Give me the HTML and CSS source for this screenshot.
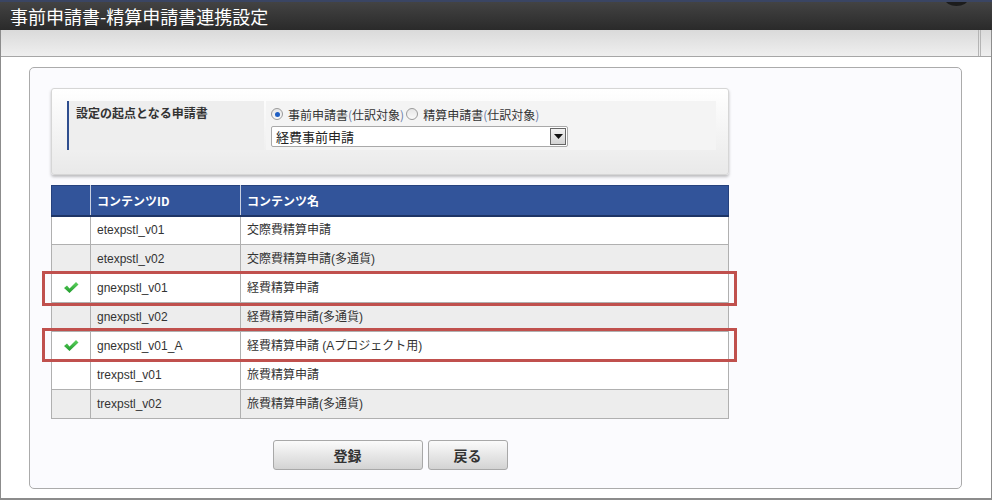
FILE: index.html
```html
<!DOCTYPE html>
<html lang="ja">
<head>
    <meta charset="UTF-8">
    <title>事前申請書-精算申請書連携設定</title>
    <link rel="stylesheet" href="styles.css">
</head>
<body>
<div class="window">
    <div class="titlebar">
        事前申請書-精算申請書連携設定
        <span class="title-knob"></span>
    </div>
    <div class="toolbar">
        <span class="toolbar-split"></span>
    </div>

    <div class="content">
        <div class="panel">
            <div class="search-box">
                <div class="search-row">
                    <div class="search-label">設定の起点となる申請書</div>
                    <div class="search-value">
                        <div class="radios">
                            <label class="radio"><span class="radio-dot checked"></span>事前申請書<span class="paren">(</span>仕訳対象<span class="paren">)</span></label>
                            <label class="radio"><span class="radio-dot"></span>精算申請書<span class="paren">(</span>仕訳対象<span class="paren">)</span></label>
                        </div>
                        <div class="select">
                            <span class="select-text">経費事前申請</span>
                            <span class="select-btn">
                                <svg width="9" height="5" viewBox="0 0 9 5"><polygon points="0,0 9,0 4.5,5" fill="#111"/></svg>
                            </span>
                        </div>
                    </div>
                </div>
            </div>

            <div class="table-wrap">
                <table class="grid">
                    <thead>
                        <tr>
                            <th class="col-check"></th>
                            <th class="col-id">コンテンツID</th>
                            <th>コンテンツ名</th>
                        </tr>
                    </thead>
                    <tbody>
                        <tr><td></td><td>etexpstl_v01</td><td>交際費精算申請</td></tr>
                        <tr class="alt"><td></td><td>etexpstl_v02</td><td>交際費精算申請(多通貨)</td></tr>
                        <tr><td class="check"><svg width="16" height="13" viewBox="0 0 16 13"><defs><linearGradient id="g1" x1="0" y1="0" x2="0" y2="1"><stop offset="0" stop-color="#5fd35f"/><stop offset="1" stop-color="#1f9a2c"/></linearGradient></defs><polygon points="1,7 4,4.5 6.5,7.5 13,1 15.5,3.5 6.5,12" fill="url(#g1)"/></svg></td><td>gnexpstl_v01</td><td>経費精算申請</td></tr>
                        <tr class="alt"><td></td><td>gnexpstl_v02</td><td>経費精算申請(多通貨)</td></tr>
                        <tr><td class="check"><svg width="16" height="13" viewBox="0 0 16 13"><defs><linearGradient id="g2" x1="0" y1="0" x2="0" y2="1"><stop offset="0" stop-color="#5fd35f"/><stop offset="1" stop-color="#1f9a2c"/></linearGradient></defs><polygon points="1,7 4,4.5 6.5,7.5 13,1 15.5,3.5 6.5,12" fill="url(#g2)"/></svg></td><td>gnexpstl_v01_A</td><td>経費精算申請 (Aプロジェクト用)</td></tr>
                        <tr><td></td><td>trexpstl_v01</td><td>旅費精算申請</td></tr>
                        <tr class="alt"><td></td><td>trexpstl_v02</td><td>旅費精算申請(多通貨)</td></tr>
                    </tbody>
                </table>
                <!-- 注目行の赤枠 -->
                <div class="mark mark1"></div>
                <div class="mark mark2"></div>
            </div>

            <div class="buttons">
                <button class="btn btn-wide">登録</button>
                <button class="btn">戻る</button>
            </div>
        </div>
    </div>
</div>
</body>
</html>
```

FILE: styles.css
```css
body {
    margin: 0;
    font-family: "Liberation Sans", "Noto Sans CJK JP", sans-serif;
    font-size: 12px;
    color: #333;
    background: #fff;
    overflow: hidden;
}
.window {
    width: 992px;
    height: 500px;
    box-sizing: border-box;
    border: 1px solid #8c8c8c;
    border-top: none;
    border-bottom-width: 2px;
}
.titlebar {
    position: relative;
    height: 28px;
    line-height: 28px;
    border-top: 2px solid #3a4563;
    margin: 0 -1px;
    padding-left: 10px;
    background: linear-gradient(#434343, #2a2a2a);
    color: #fff;
    font-family: "Noto Sans CJK JP", sans-serif;
    font-size: 18px;
    overflow: hidden;
}
.title-knob {
    position: absolute;
    top: -10px;
    left: 945px;
    width: 23px;
    height: 14px;
    border-radius: 50%;
    background: #1c1c1c;
}
.toolbar {
    display: flex;
    justify-content: flex-end;
    height: 26px;
    background: linear-gradient(#dadada, #efefef);
    border-bottom: 1px solid #a6a6a6;
}
.toolbar-split {
    width: 1px;
    margin-right: 10px;
    border-left: 1px solid #b4b4b4;
    border-right: 1px solid #b4b4b4;
}
.content {
    padding: 10px 0 0 28px;
}
.panel {
    width: 933px;
    height: 422px;
    box-sizing: border-box;
    border: 1px solid #ababab;
    border-radius: 5px;
    background: #fbfbfe;
    padding: 20px 0 0 21px;
}
.search-box {
    width: 678px;
    height: 87px;
    box-sizing: border-box;
    border: 1px solid #d6d6d6;
    border-radius: 3px;
    background: linear-gradient(#fff, #e9e9e9);
    box-shadow: 0 2px 3px rgba(0, 0, 0, 0.25);
    padding: 12px 12px 0 12px;
}
.search-row {
    display: flex;
    gap: 2px;
    height: 49px;
}
.search-label {
    width: 197px;
    margin-left: 3px;
    border-left: 2px solid #2f4e8e;
    background: #eeeeee;
    padding: 3px 0 0 7px;
    box-sizing: border-box;
    font-family: "Noto Sans CJK JP", sans-serif;
    font-weight: bold;
    color: #333;
}
.search-value {
    flex: 1;
    background: #f4f4f4;
    padding: 3px 0 0 5px;
    font-family: "Noto Sans CJK JP", sans-serif;
}
.radios {
    display: flex;
    gap: 2px;
    height: 20px;
    align-items: center;
}
.radio {
    display: flex;
    align-items: center;
    color: #333;
}
.paren {
    color: #6a7ca8;
}
.radio-dot {
    width: 10px;
    height: 10px;
    border-radius: 50%;
    border: 1px solid #9a9a9a;
    background: linear-gradient(#e6e6e6, #fafafa);
    margin-right: 5px;
    display: flex;
    align-items: center;
    justify-content: center;
}
.radio-dot.checked::after {
    content: "";
    width: 5px;
    height: 5px;
    border-radius: 50%;
    background: #1f5fc4;
}
.select {
    display: flex;
    width: 297px;
    height: 21px;
    box-sizing: border-box;
    border: 1px solid #a9a9a9;
    border-radius: 2px;
    background: #fff;
    margin-top: 2px;
}
.select-text {
    flex: 1;
    padding-left: 4px;
    line-height: 19px;
    font-size: 13px;
    color: #222;
}
.select-btn {
    width: 14px;
    height: 15px;
    margin: 1px;
    border: 1px solid #666;
    background: linear-gradient(#f2f2f2, #d4d4d4);
    display: flex;
    align-items: center;
    justify-content: center;
}
.table-wrap {
    position: relative;
    width: 678px;
    margin-top: 10px;
}
.grid {
    width: 100%;
    border-collapse: collapse;
}
.grid th {
    box-sizing: border-box;
    height: 30px;
    background: #32549a;
    color: #fff;
    text-align: left;
    padding: 0 6px;
    font-family: "Noto Sans CJK JP", sans-serif;
    font-size: 12px;
    border: 1px solid #25417d;
    border-right-color: #c9d1e2;
    border-bottom: 2px solid #1e3566;
}
.grid th:last-child {
    border-right-color: #25417d;
}
.grid td {
    box-sizing: border-box;
    height: 29px;
    padding: 0 6px;
    border: 1px solid #b0b0b0;
    background: #fff;
    color: #333;
    line-height: 16px;
}
.grid tr.alt td {
    background: #ededed;
}
.col-check {
    width: 39px;
}
.col-id {
    width: 150px;
}
.grid td.check {
    text-align: center;
    padding: 2px 0 0 0;
}
.mark {
    position: absolute;
    left: -9px;
    right: -8px;
    border: 3px solid #c0504d;
}
.mark1 {
    top: 86px;
    height: 29px;
}
.mark2 {
    top: 143px;
    height: 28px;
}
.buttons {
    display: flex;
    justify-content: center;
    gap: 5px;
    width: 678px;
    margin-top: 21px;
}
.btn {
    width: 80px;
    height: 30px;
    border: 1px solid #a8a8a8;
    border-radius: 3px;
    background: linear-gradient(#fbfbfb, #d3d3d3);
    font-family: "Noto Sans CJK JP", sans-serif;
    font-size: 14px;
    font-weight: bold;
    color: #333;
    cursor: pointer;
}
.btn-wide {
    width: 150px;
}
```
